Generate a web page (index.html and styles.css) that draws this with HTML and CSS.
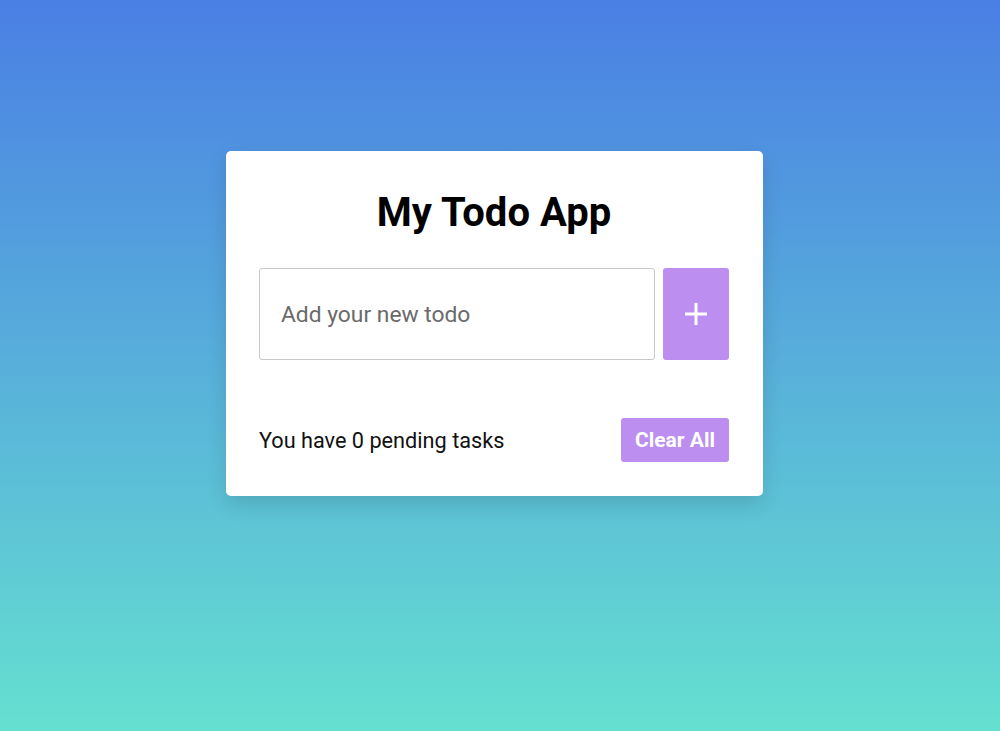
FILE: index.html
```html
<!DOCTYPE html>
<html>
<head>
<meta charset="utf-8">
<link rel="stylesheet" href="styles.css">
</head>
<body>
<div class="page">
  <div class="card">
    <h1 class="title">My Todo App</h1>
    <div class="input-row">
      <input class="todo-input" type="text" placeholder="Add your new todo">
      <button class="add-btn" aria-label="Add">
        <svg width="26" height="26" viewBox="0 0 26 26"><path d="M13 2v22M2 13h22" stroke="#fff" stroke-width="3" stroke-linecap="butt"/></svg>
      </button>
    </div>
    <div class="footer">
      <span class="pending">You have 0 pending tasks</span>
      <button class="clear-btn">Clear All</button>
    </div>
  </div>
</div>
</body>
</html>
```
FILE: styles.css
```css
* { box-sizing: border-box; }
html, body { margin: 0; height: 100%; }
body {
  font-family: Roboto, "Noto Sans", sans-serif;
  background: linear-gradient(to bottom, #4a7fe4 0%, #65e0d0 100%);
  min-height: 731px;
}
.page {
  display: flex;
  justify-content: center;
  padding: 151px 11px 0 0;
}
.card {
  width: 537px;
  height: 345px;
  background: #fff;
  border-radius: 5px;
  box-shadow: 0 8px 20px rgba(0,0,0,0.12);
  padding: 0 34px 0 33px;
}
.title {
  margin: 0;
  padding-top: 40px;
  height: 117px;
  text-align: center;
  font-size: 40px;
  font-weight: 700;
  color: #000;
  line-height: 44px;
}
.input-row {
  display: flex;
  gap: 8px;
  height: 92px;
}
.todo-input {
  flex: 1;
  height: 92px;
  border: 1px solid #c8c8c8;
  border-radius: 3px;
  padding: 0 21px;
  font-family: Roboto, sans-serif;
  font-size: 22.8px;
  font-weight: 400;
  color: #333;
  outline: none;
}
.todo-input::placeholder { color: #6a6a6a; }
.add-btn {
  width: 66px;
  height: 92px;
  border: none;
  border-radius: 3px;
  background: #bb8ef0;
  display: flex;
  align-items: center;
  justify-content: center;
  padding: 0;
}
.footer {
  display: flex;
  justify-content: space-between;
  align-items: center;
  margin-top: 58px;
}
.pending {
  font-size: 21.7px;
  font-weight: 400;
  color: #111;
}
.clear-btn {
  width: 108px;
  height: 44px;
  border: none;
  border-radius: 3px;
  background: #bb8ef0;
  color: #fff;
  font-family: Roboto, sans-serif;
  font-weight: 700;
  font-size: 21px;
  padding: 0;
}
```
